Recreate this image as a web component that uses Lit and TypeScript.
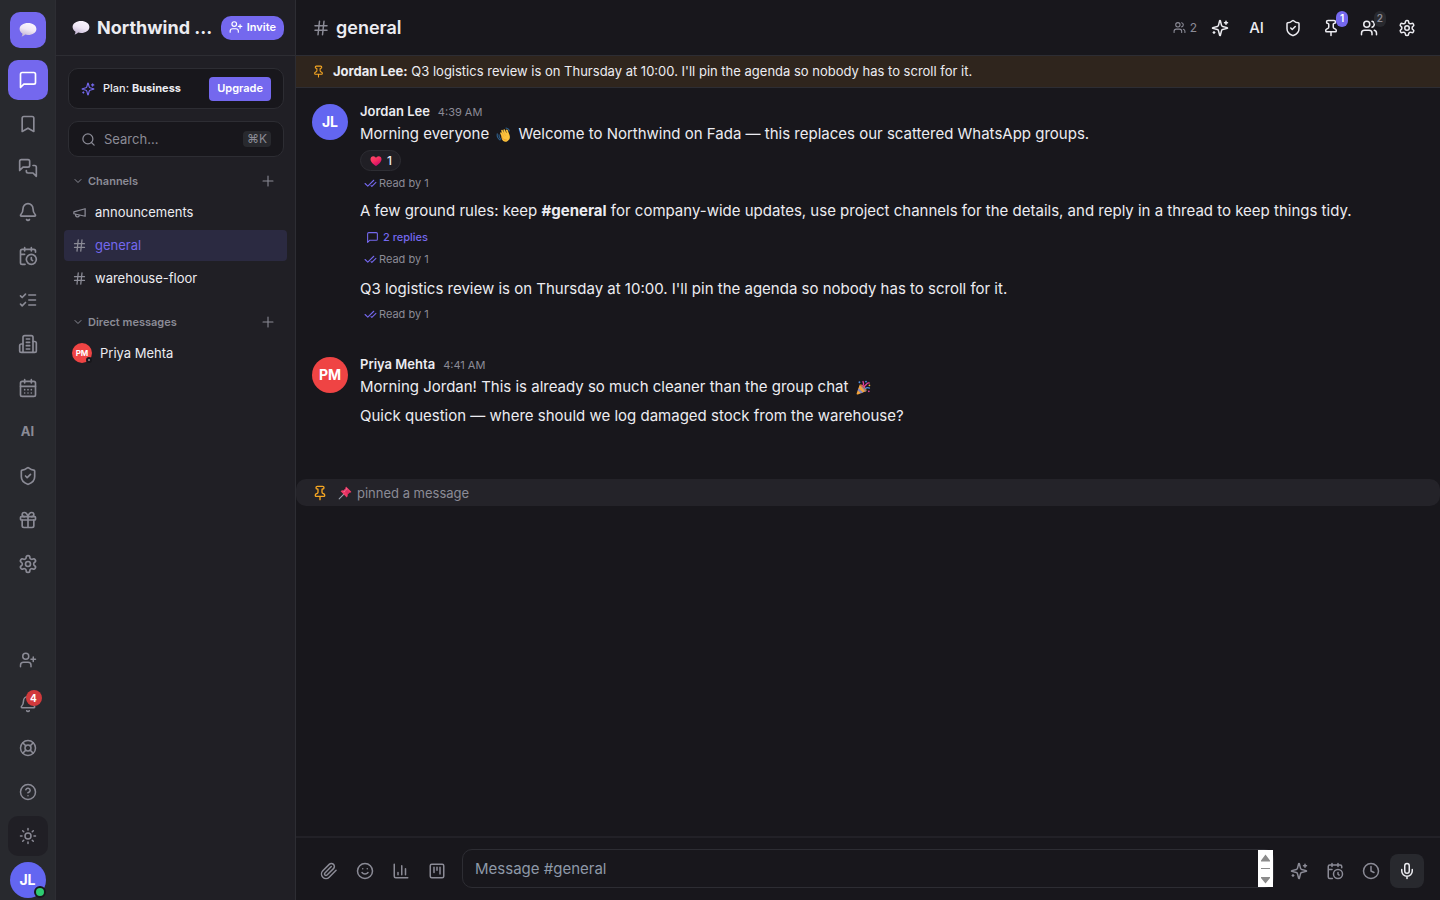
import { LitElement, html, css, svg, nothing, type TemplateResult } from "lit";
import { customElement, property } from "lit/decorators.js";

const ICONS: Record<string, TemplateResult<2>> = {
  message: svg`<path d="M21 15a2 2 0 0 1-2 2H7l-4 4V5a2 2 0 0 1 2-2h14a2 2 0 0 1 2 2z"/>`,
  bookmark: svg`<path d="m19 21-7-4-7 4V5a2 2 0 0 1 2-2h10a2 2 0 0 1 2 2z"/>`,
  messages: svg`<path d="M14 9a2 2 0 0 1-2 2H6l-4 4V4a2 2 0 0 1 2-2h8a2 2 0 0 1 2 2z"/><path d="M18 9h2a2 2 0 0 1 2 2v11l-4-4h-6a2 2 0 0 1-2-2v-1"/>`,
  bell: svg`<path d="M10.268 21a2 2 0 0 0 3.464 0"/><path d="M3.262 15.326A1 1 0 0 0 4 17h16a1 1 0 0 0 .74-1.673C19.41 13.956 18 12.499 18 8A6 6 0 0 0 6 8c0 4.499-1.411 5.956-2.738 7.326"/>`,
  schedule: svg`<path d="M21 7.5V6a2 2 0 0 0-2-2H5a2 2 0 0 0-2 2v14a2 2 0 0 0 2 2h3.5M16 2v4M8 2v4M3 10h5M17.5 17.5 16 16.3V14"/><circle cx="16" cy="16" r="6"/>`,
  tasks: svg`<path d="m3 17 2 2 4-4M3 7l2 2 4-4M13 6h8M13 12h8M13 18h8"/>`,
  building: svg`<path d="M6 22V4a2 2 0 0 1 2-2h8a2 2 0 0 1 2 2v18Z"/><path d="M6 12H4a2 2 0 0 0-2 2v6a2 2 0 0 0 2 2h2M18 9h2a2 2 0 0 1 2 2v9a2 2 0 0 1-2 2h-2M10 6h4M10 10h4M10 14h4M10 18h4"/>`,
  calendar: svg`<path d="M8 2v4M16 2v4M3 10h18"/><rect width="18" height="18" x="3" y="4" rx="2"/><path d="M8 14h.01M12 14h.01M16 14h.01M8 18h.01M12 18h.01M16 18h.01"/>`,
  shield: svg`<path d="M20 13c0 5-3.5 7.5-7.66 8.95a1 1 0 0 1-.67-.01C7.5 20.5 4 18 4 13V6a1 1 0 0 1 1-1c2 0 4.5-1.2 6.24-2.72a1.17 1.17 0 0 1 1.52 0C14.51 3.81 17 5 19 5a1 1 0 0 1 1 1z"/><path d="m9 12 2 2 4-4"/>`,
  gift: svg`<rect x="3" y="8" width="18" height="4" rx="1"/><path d="M12 8v13M19 12v7a2 2 0 0 1-2 2H7a2 2 0 0 1-2-2v-7"/><path d="M7.5 8a2.5 2.5 0 0 1 0-5A4.8 8 0 0 1 12 8a4.8 8 0 0 1 4.5-5 2.5 2.5 0 0 1 0 5"/>`,
  settings: svg`<path d="M12.22 2h-.44a2 2 0 0 0-2 2v.18a2 2 0 0 1-1 1.73l-.43.25a2 2 0 0 1-2 0l-.15-.08a2 2 0 0 0-2.73.73l-.22.38a2 2 0 0 0 .73 2.73l.15.1a2 2 0 0 1 1 1.72v.51a2 2 0 0 1-1 1.74l-.15.09a2 2 0 0 0-.73 2.73l.22.38a2 2 0 0 0 2.73.73l.15-.08a2 2 0 0 1 2 0l.43.25a2 2 0 0 1 1 1.73V20a2 2 0 0 0 2 2h.44a2 2 0 0 0 2-2v-.18a2 2 0 0 1 1-1.73l.43-.25a2 2 0 0 1 2 0l.15.08a2 2 0 0 0 2.73-.73l.22-.39a2 2 0 0 0-.73-2.73l-.15-.08a2 2 0 0 1-1-1.74v-.5a2 2 0 0 1 1-1.74l.15-.09a2 2 0 0 0 .73-2.73l-.22-.38a2 2 0 0 0-2.73-.73l-.15.08a2 2 0 0 1-2 0l-.43-.25a2 2 0 0 1-1-1.73V4a2 2 0 0 0-2-2z"/><circle cx="12" cy="12" r="3"/>`,
  userPlus: svg`<path d="M16 21v-2a4 4 0 0 0-4-4H6a4 4 0 0 0-4 4v2M19 8v6M22 11h-6"/><circle cx="9" cy="7" r="4"/>`,
  users: svg`<path d="M16 21v-2a4 4 0 0 0-4-4H6a4 4 0 0 0-4 4v2M22 21v-2a4 4 0 0 0-3-3.87M16 3.13a4 4 0 0 1 0 7.75"/><circle cx="9" cy="7" r="4"/>`,
  lifebuoy: svg`<circle cx="12" cy="12" r="10"/><path d="m4.93 4.93 4.24 4.24M14.83 9.17l4.24-4.24M14.83 14.83l4.24 4.24M9.17 14.83l-4.24 4.24"/><circle cx="12" cy="12" r="4"/>`,
  help: svg`<circle cx="12" cy="12" r="10"/><path d="M9.09 9a3 3 0 0 1 5.83 1c0 2-3 3-3 3M12 17h.01"/>`,
  sun: svg`<circle cx="12" cy="12" r="4"/><path d="M12 2v2M12 20v2M4.93 4.93l1.41 1.41M17.66 17.66l1.41 1.41M2 12h2M20 12h2M6.34 17.66l-1.41 1.41M19.07 4.93l-1.41 1.41"/>`,
  sparkles: svg`<path d="M9.937 15.5A2 2 0 0 0 8.5 14.063l-6.135-1.582a.5.5 0 0 1 0-.962L8.5 9.936A2 2 0 0 0 9.937 8.5l1.582-6.135a.5.5 0 0 1 .963 0L14.063 8.5A2 2 0 0 0 15.5 9.937l6.135 1.581a.5.5 0 0 1 0 .964L15.5 14.063a2 2 0 0 0-1.437 1.437l-1.582 6.135a.5.5 0 0 1-.963 0zM20 3v4M22 5h-4M4 17v2M5 18H3"/>`,
  search: svg`<circle cx="11" cy="11" r="8"/><path d="m21 21-4.3-4.3"/>`,
  chevron: svg`<path d="m6 9 6 6 6-6"/>`,
  plus: svg`<path d="M4.500 12h15M12 4.500v15" stroke-width="1.600"/>`,
  megaphone: svg`<path d="m3 11 18-5v12L3 14v-3z"/><path d="M11.6 16.8a3 3 0 1 1-5.8-1.6"/>`,
  hash: svg`<path d="M4 9h16M4 15h16M10 3 8 21M16 3l-2 18"/>`,
  pin: svg`<path d="M12 17v5M9 10.76a2 2 0 0 1-1.11 1.79l-1.78.9A2 2 0 0 0 5 15.24V16a1 1 0 0 0 1 1h12a1 1 0 0 0 1-1v-.76a2 2 0 0 0-1.11-1.79l-1.78-.9A2 2 0 0 1 15 10.76V7a1 1 0 0 1 1-1 2 2 0 0 0 0-4H8a2 2 0 0 0 0 4 1 1 0 0 1 1 1z"/>`,
  checks: svg`<path d="M18 6 7 17l-5-5M22 10l-7.5 7.5L13 16"/>`,
  clip: svg`<path d="m21.44 11.05-9.19 9.19a6 6 0 0 1-8.49-8.49l8.57-8.57A4 4 0 1 1 18 8.84l-8.59 8.57a2 2 0 0 1-2.83-2.83l8.49-8.48"/>`,
  smile: svg`<circle cx="12" cy="12" r="10"/><path d="M8 14s1.5 2 4 2 4-2 4-2M9 9h.01M15 9h.01"/>`,
  chart: svg`<path d="M3 3v16a2 2 0 0 0 2 2h16M18 17V9M13 17V5M8 17v-3"/>`,
  kanban: svg`<rect width="18" height="18" x="3" y="3" rx="2"/><path d="M8 7v7M12 7v4M16 7v9"/>`,
  clock: svg`<circle cx="12" cy="12" r="10"/><path d="M12 6v6l4 2"/>`,
  mic: svg`<path d="M12 19v3M19 10v2a7 7 0 0 1-14 0v-2"/><rect x="9" y="2" width="6" height="13" rx="3"/>`,
};

const EMOJI: Record<string, TemplateResult<2>> = {
  bubble: svg`<defs><linearGradient id="b" x1="0.7" y1="0" x2="0.3" y2="1"><stop offset="0" stop-color="#fbf6ff"/><stop offset=".5" stop-color="#efe7f5"/><stop offset="1" stop-color="#c3b4d3"/></linearGradient></defs><path d="M12 2.500c6.200 0 11.200 3.400 11.200 8s-5 8-11.200 8c-1.400 0-2.700-.2-3.900-.5-1.200 1.500-2.800 2.400-4.700 2.500 1-1 1.300-2.400 1.100-3.900C2.300 15.200.8 13 .8 10.500c0-4.600 5-8 11.200-8z" fill="url(#b)"/>`,
  wave: svg`<path d="M2 11c-.6 4 1 7.500 4.500 9.800M4.800 12.500c-.3 2.800.8 5 3 6.800M16 1.600c2.800.4 4.500 2 5.200 4.600" stroke="#2f5f8a" stroke-width="1.800" fill="none" stroke-linecap="round"/><path d="M7.600 13.500 5.800 9.400c-.7-1.700 1.400-2.800 2.300-1.200l1.300 2.300-2-5c-.7-1.800 1.700-2.800 2.600-1.100l2.300 4.600-1.400-4.600c-.6-1.900 2-2.600 2.700-.8l2 5.200.2-1.300-.8-3c-.3-1.800 2-2.200 2.600-.7l2.900 7.700c1.800 4.800 0 8.900-3.900 10.500-3.600 1.400-7-.2-8.400-4.200z" transform="translate(1 1)" fill="#fcc33d"/><path d="m10.400 11.500 2.300 4M13.300 10l1.900 4.100" stroke="#f0a52e" stroke-width="1" fill="none"/><path d="M8.800 15c1.400 4 4.400 6.300 8.300 5.600" stroke="#e89124" stroke-width="1.200" fill="none"/>`,
  heart: svg`<defs><linearGradient id="h" x1="0" y1="0" x2=".6" y2="1"><stop offset="0" stop-color="#ff4d6a"/><stop offset=".5" stop-color="#f92f60"/><stop offset="1" stop-color="#ca0b6a"/></linearGradient></defs><path d="M6.700 2.500C9.200 2.500 11 4 12 5.800c1-1.800 2.800-3.300 5.300-3.300 3.300 0 5.700 2.600 5.700 6 0 6-6.500 10.500-11 13.500C7.500 19 1 14.500 1 8.500c0-3.400 2.400-6 5.700-6z" fill="url(#h)"/>`,
  party: svg`<path d="M6 7 17 17.500 3 23c-1.300.5-2.400-.6-1.900-1.900z" fill="#f2a33a"/><path d="m4 13.200 7.300 6.800-3.300 1.300-5.200-5zM6 7.300l8.500 11.200 2.500-1z" fill="#7d86c9"/><path d="M6.800 7.500c4 1.500 7.300 5 9.500 9.400" stroke="#c9762c" stroke-width="2.200" fill="none"/><path d="M11 9.500c1.500-2 1.600-4 .2-7" stroke="#e0419a" stroke-width="2.200" fill="none" stroke-linecap="round"/><path d="M15 13.500c2-1.600 4-1.800 6.500-.6" stroke="#4e8fe0" stroke-width="2.200" fill="none" stroke-linecap="round"/><path d="M13 11.500c.8-3.500 3-3 4-5 .6-1.400 1.800-2 4-1.800" stroke="#e0419a" stroke-width="2.200" fill="none" stroke-linecap="round"/><circle cx="16" cy="2.500" r="1.500" fill="#4e8fe0"/><circle cx="5.500" cy="3.500" r="1.500" fill="#4e8fe0"/><circle cx="21.500" cy="8.500" r="1.400" fill="#ffb52e"/><circle cx="20.500" cy="18" r="1.400" fill="#e0419a"/>`,
  pushpin: svg`<path d="M10.500 13.500 2 22" stroke="#9ba3b0" stroke-width="1.800" stroke-linecap="round"/><path d="M14.600 1.600 22.400 9.400c.6.600.2 1.700-.7 1.700l-1.600-.1-3.600 3.600c.4 1.900 0 3.500-1.400 4.900L4.500 8.900c1.400-1.400 3-1.800 4.900-1.400L13 3.900l-.1-1.600c0-.9 1.100-1.300 1.700-.7z" fill="#ef3a67"/><path d="m15 5-4.500 4.500" stroke="#ff86a0" stroke-width="1.800" stroke-linecap="round"/><path d="m16.500 14.600-7-7 3.500-3.700 7 7z" fill="#c81e5b" opacity=".45"/>`,
};

const icon = (name: string, size = 20) => svg`<svg xmlns="http://www.w3.org/2000/svg" width=${size} height=${size} viewBox="0 0 24 24" fill="none" stroke="currentColor" stroke-width="2" stroke-linecap="round" stroke-linejoin="round" aria-hidden="true">${ICONS[name]}</svg>`;
const emoji = (name: string, size: number, label = "") => svg`<svg xmlns="http://www.w3.org/2000/svg" class="emoji" width=${size} height=${size} viewBox="0 0 24 24" role="img" aria-label=${label}>${EMOJI[name]}</svg>`;

const base = css`
  *, *::before, *::after { box-sizing: border-box; }
  :host { font-family: Inter, sans-serif; color: var(--text); }
  button, input, textarea { font: inherit; color: inherit; margin: 0; padding: 0; border: 0; background: none; }
  button { display: inline-flex; align-items: center; justify-content: center; cursor: pointer; flex: none; }
  svg { display: block; flex: none; }
  h1, h2, h3, p, ul { margin: 0; padding: 0; font-size: inherit; list-style: none; }
  a { color: inherit; text-decoration: none; }
`;

@customElement("nav-rail")
export class NavRail extends LitElement {
  static styles = [base, css`
    :host { display: flex; flex-direction: column; align-items: center; gap: 4px; width: 56px; height: 100%; padding-top: 12px;
      background: var(--rail); border-right: 1px solid var(--line); color: var(--muted); }
    .logo { width: 36px; height: 36px; margin-bottom: 8px; border-radius: 10px; background: var(--accent); }
    .item { position: relative; width: 40px; height: 40px; border-radius: 10px; }
    .active { background: var(--accent); color: #fff; }
    .theme { background: var(--side); }
    .spacer { flex: 1; }
    .ai { display: block; padding-bottom: 2px; font-size: 13px; font-weight: 700; line-height: 16px; }
    .badge { position: absolute; top: 6px; right: 6px; min-width: 16px; height: 16px; border-radius: 8px; background: #d13a3c; color: #fff;
      font-size: 10px; font-weight: 700; line-height: 16px; text-align: center; }
    .me { width: 36px; height: 36px; border-radius: 50%; background: #6366f1; color: #fff; font-size: 14px; font-weight: 700; line-height: 36px; }
    .dot { position: absolute; right: 2px; bottom: 2px; width: 12px; height: 12px; border-radius: 50%; border: 2px solid var(--main); background: #2ecc71; }
  `];
  render() {
    const top: [string, string][] = [["message", "Chat"], ["bookmark", "Saved"], ["messages", "Threads"], ["bell", "Activity"], ["schedule", "Scheduled"],
      ["tasks", "Tasks"], ["building", "Company"], ["calendar", "Calendar"], ["ai", "AI"], ["shield", "Security"], ["gift", "Rewards"], ["settings", "Settings"]];
    const bottom: [string, string][] = [["userPlus", "Invite people"], ["bell", "Notifications"], ["lifebuoy", "Support"], ["help", "Help"], ["sun", "Theme"]];
    return html`
      <button class="logo" aria-label="Workspace">${emoji("bubble", 18)}</button>
      ${top.map(([n, l], i) => html`<button class="item ${i === 0 ? "active" : ""}" aria-label=${l}>${n === "ai" ? html`<span class="ai">AI</span>` : icon(n)}</button>`)}
      <span class="spacer"></span>
      ${bottom.map(([n, l]) => html`<button class="item ${n === "sun" ? "theme" : ""}" aria-label=${l}>${icon(n, 18)}${n === "bell" ? html`<span class="badge">4</span>` : nothing}</button>`)}
      <button class="item" aria-label="My profile"><span class="me">JL</span><span class="dot"></span></button>`;
  }
}

@customElement("channel-sidebar")
export class ChannelSidebar extends LitElement {
  static styles = [base, css`
    :host { display: flex; flex-direction: column; width: 240px; height: 100%; background: var(--side); border-right: 1px solid var(--line); font-size: 13px; }
    header { display: flex; align-items: center; gap: 7px; height: 56px; padding: 0 11px 0 16px; border-bottom: 1px solid var(--line); }
    h1 { flex: 1; min-width: 0; font-size: 18px; line-height: 24px; font-weight: 700; white-space: nowrap; }
    .invite { gap: 4px; height: 24px; padding: 0 8px 1px; border-radius: 10px; background: var(--accent); color: #fff; font-size: 11px; font-weight: 600; }
    .tools { display: flex; flex-direction: column; gap: 12px; padding: 12px 11px 12px 12px; }
    .plan, .search { display: flex; align-items: center; gap: 8px; padding: 0 12px; background: var(--main); border: 1px solid var(--line); border-radius: 10px; }
    .plan { height: 41px; font-size: 11px; font-weight: 500; }
    .plan .spark { color: var(--accent); }
    .plan p { flex: 1; padding-bottom: 1px; }
    b { font-weight: 700; }
    .upgrade { height: 24px; padding: 0 8px 1px; border-radius: 4px; background: var(--accent); color: #fff; font-weight: 600; }
    .search { height: 36px; color: var(--muted); }
    .search input { flex: 1; min-width: 0; outline: none; }
    .search input::placeholder { color: var(--muted); opacity: 1; }
    kbd { padding: 0 4px; border-radius: 4px; background: var(--rail); font: 12px/16px Inter, "DejaVu Sans", sans-serif; }
    .section { display: flex; align-items: center; gap: 4px; height: 24px; padding: 0 19px 0 16px; color: var(--muted); font-size: 11px; font-weight: 600; }
    .section h2 { flex: 1; font-weight: 600; }
    ul { display: flex; flex-direction: column; gap: 2px; padding: 4px 8px 16px; }
    .row { display: flex; align-items: center; gap: 8px; height: 31px; padding: 0 8px 1px; border-radius: 4px; font-weight: 400; line-height: 16px; }
    .row svg { color: var(--muted); }
    .row.on { background: #2b2a41; color: var(--accent); }
    .ava { position: relative; width: 20px; height: 20px; border-radius: 50%; background: #ef4444; color: #fff; font-size: 8px; font-weight: 700; line-height: 20px; text-align: center; }
    .dot { position: absolute; right: 0; bottom: 0; width: 6px; height: 6px; border-radius: 50%; border: 2px solid var(--main); background: var(--muted); }
  `];
  render() {
    const channels: [string, string][] = [["megaphone", "announcements"], ["hash", "general"], ["hash", "warehouse-floor"]];
    return html`
      <header>${emoji("bubble", 18)}<h1>Northwind ...</h1><button class="invite">${icon("userPlus", 14)}Invite</button></header>
      <div class="tools">
        <div class="plan"><span class="spark">${icon("sparkles", 14)}</span><p>Plan: <b>Business</b></p><button class="upgrade">Upgrade</button></div>
        <label class="search">${icon("search", 15)}<input type="text" placeholder="Search..." aria-label="Search" /><kbd>⌘K</kbd></label>
      </div>
      <div class="section">${icon("chevron", 12)}<h2>Channels</h2><button aria-label="Add channel">${icon("plus", 16)}</button></div>
      <ul>${channels.map(([n, l]) => html`<li><a href="#${l}" class="row ${l === "general" ? "on" : ""}">${icon(n, 15)}${l}</a></li>`)}</ul>
      <div class="section">${icon("chevron", 12)}<h2>Direct messages</h2><button aria-label="New message">${icon("plus", 16)}</button></div>
      <ul><li><a href="#priya" class="row"><span class="ava">PM<span class="dot"></span></span>Priya Mehta</a></li></ul>`;
  }
}

@customElement("message-group")
export class MessageGroup extends LitElement {
  static styles = [base, css`
    :host { display: flex; gap: 12px; padding: 0 16px; }
    .ava { flex: none; width: 36px; height: 36px; border-radius: 50%; color: #fff; font-size: 14px; font-weight: 700; line-height: 36px; text-align: center; }
    .jl { background: #6366f1; }
    .pm { background: #ef4444; }
    .col { flex: 1; min-width: 0; display: flex; flex-direction: column; gap: 4px; }
    .by { display: flex; align-items: baseline; gap: 8px; line-height: 14px; }
    .by h3 { font-size: 13px; font-weight: 600; line-height: 14px; }
    time { color: var(--muted); font-size: 11px; }
  `];
  @property() initials = "";
  @property() name = "";
  @property() time = "";
  render() {
    return html`<span class="ava ${this.initials.toLowerCase()}">${this.initials}</span>
      <div class="col"><div class="by"><h3>${this.name}</h3><time>${this.time}</time></div><slot></slot></div>`;
  }
}

@customElement("app-root")
export class AppRoot extends LitElement {
  static styles = [base, css`
    :host { --rail: #28292e; --side: #201f25; --main: #18171c; --line: #2d2d33; --accent: #7468ee; --text: #ececf1; --muted: #8b8b96;
      display: grid; grid-template-columns: auto auto minmax(0, 1fr); height: 100vh; background: var(--main); overflow: hidden; }
    main { display: flex; flex-direction: column; min-width: 0; height: 100vh; }
    header { display: flex; align-items: center; gap: 6px; flex: none; height: 56px; padding: 0 16px; border-bottom: 1px solid var(--line); }
    header .hash { color: var(--muted); }
    h2 { flex: 1; font-size: 18px; font-weight: 600; line-height: 24px; }
    .count { display: flex; align-items: center; gap: 4px; color: var(--muted); font-size: 12px; }
    .acts { display: flex; gap: 4px; }
    .act { position: relative; width: 34px; height: 34px; border-radius: 8px; }
    .act.word { width: 31px; font-size: 15px; font-weight: 500; }
    .badge { position: absolute; top: 0; right: 0; min-width: 12px; height: 16px; padding: 0 3px; border-radius: 8px; background: var(--accent); color: #fff; font-size: 10px; font-weight: 600; line-height: 15px; text-align: center; }
    .badge.dim { background: var(--rail); color: var(--muted); }
    .pinned { display: flex; align-items: center; gap: 8px; flex: none; height: 32px; padding: 0 16px; background: #2f251d; border-bottom: 1px solid var(--line); font-size: 13px; line-height: 16px; }
    .pinned p { padding-bottom: 1px; }
    .pinned svg, .system > svg:first-child { color: #f5a623; }
    b { font-weight: 700; }
    .feed { flex: 1; min-height: 0; display: flex; flex-direction: column; gap: 31px; padding-top: 16px; overflow: hidden; }
    .list { display: flex; flex-direction: column; gap: 7px; }
    .list .text { font-size: 15px; line-height: 22px; }
    .text .emoji { display: inline-block; vertical-align: -3px; margin: 0 3px; }
    .react { display: flex; width: max-content; gap: 5px; margin-top: 5px; height: 21px; padding: 0 8px 0 9px; border: 1px solid var(--line); border-radius: 11px; background: var(--side); font-size: 12px; font-weight: 500; }
    .replies { gap: 4px; display: flex; width: max-content; margin-top: 7px; padding: 0 6px; color: var(--accent); font-size: 11px; font-weight: 500; line-height: 16px; }
    .read { display: flex; align-items: center; gap: 2px; margin: 6px 0 4px; padding: 0 4px; color: var(--muted); font-size: 11px; line-height: 16px; }
    .react + .read { margin: 4px 0 2px; }
    .read svg { color: var(--accent); }
    .system { display: flex; align-items: center; gap: 5px; height: 27px; margin-top: 21px; padding: 0 16px; border-radius: 10px; background: #242329; color: var(--muted); font-size: 13px; }
    .system .emoji { margin-left: 5px; }
    footer { display: flex; align-items: flex-end; gap: 8px; flex: none; padding: 11px 16px 12px; border-top: 2px solid #222127; color: var(--muted); }
    .tools { display: flex; gap: 2px; }
    .tool { width: 34px; height: 34px; border-radius: 8px; }
    .box { flex: 1; display: flex; min-width: 0; height: 39px; border: 1px solid var(--line); border-radius: 10px; }
    textarea { flex: 1; min-width: 0; height: 37px; padding: 8px 12px; font-size: 15px; line-height: 21px; resize: none; outline: none; overflow: hidden; }
    textarea::placeholder { color: #8e99a8; opacity: 1; }
    .mic { background: var(--rail); color: var(--text); }
  `];
  private read() {
    return html`<p class="read">${icon("checks", 13)}Read by 1</p>`;
  }
  render() {
    return html`
      <nav-rail></nav-rail>
      <channel-sidebar></channel-sidebar>
      <main>
        <header>
          <span class="hash">${icon("hash", 18)}</span><h2>general</h2>
          <span class="count">${icon("users", 13)}2</span>
          <div class="acts">
            <button class="act" aria-label="Summarize">${icon("sparkles", 18)}</button>
            <button class="act word">AI</button>
            <button class="act" aria-label="Security">${icon("shield", 18)}</button>
            <button class="act" aria-label="Pinned messages">${icon("pin", 18)}<span class="badge">1</span></button>
            <button class="act" aria-label="Members">${icon("users", 18)}<span class="badge dim">2</span></button>
            <button class="act" aria-label="Channel settings">${icon("settings", 18)}</button>
          </div>
        </header>
        <div class="pinned">${icon("pin", 13)}<p><b>Jordan Lee:</b> Q3 logistics review is on Thursday at 10:00. I'll pin the agenda so nobody has to scroll for it.</p></div>
        <div class="feed">
          <message-group initials="JL" name="Jordan Lee" time="4:39 AM">
            <div class="list">
              <div>
                <p class="text">Morning everyone ${emoji("wave", 15, "waving hand")} Welcome to Northwind on Fada — this replaces our scattered WhatsApp groups.</p>
                <button class="react">${emoji("heart", 12, "heart")}<span>1</span></button>
                ${this.read()}
              </div>
              <div>
                <p class="text">A few ground rules: keep <b>#general</b> for company-wide updates, use project channels for the details, and reply in a thread to keep things tidy.</p>
                <button class="replies">${icon("message", 13)}2 replies</button>
                ${this.read()}
              </div>
              <div>
                <p class="text">Q3 logistics review is on Thursday at 10:00. I'll pin the agenda so nobody has to scroll for it.</p>
                ${this.read()}
              </div>
            </div>
          </message-group>
          <message-group initials="PM" name="Priya Mehta" time="4:41 AM">
            <div class="list">
              <p class="text">Morning Jordan! This is already so much cleaner than the group chat ${emoji("party", 15, "party popper")}</p>
              <p class="text">Quick question — where should we log damaged stock from the warehouse?</p>
            </div>
          </message-group>
          <p class="system">${icon("pin", 16)}${emoji("pushpin", 14, "pushpin")}pinned a message</p>
        </div>
        <footer>
          <div class="tools">
            <button class="tool" aria-label="Attach">${icon("clip", 18)}</button>
            <button class="tool" aria-label="Emoji">${icon("smile", 18)}</button>
            <button class="tool" aria-label="Poll">${icon("chart", 18)}</button>
            <button class="tool" aria-label="Board">${icon("kanban", 18)}</button>
          </div>
          <div class="box">
            <textarea rows="1" placeholder="Message #general" aria-label="Message"></textarea>
            <svg width="15" height="37" viewBox="0 0 15 37" aria-hidden="true"><path fill="#fff" d="M0 0h15v37H0z"/><path fill="#8b8b8b" d="M7.500 4.500 12 10.500v1H3v-1zM3 18h9v1H3zM3 27h9v1l-4.500 5.500L3 28z"/></svg>
          </div>
          <div class="tools">
            <button class="tool" aria-label="Write with AI">${icon("sparkles", 18)}</button>
            <button class="tool" aria-label="Schedule">${icon("schedule", 18)}</button>
            <button class="tool" aria-label="Send later">${icon("clock", 18)}</button>
            <button class="tool mic" aria-label="Record">${icon("mic", 18)}</button>
          </div>
        </footer>
      </main>`;
  }
}
